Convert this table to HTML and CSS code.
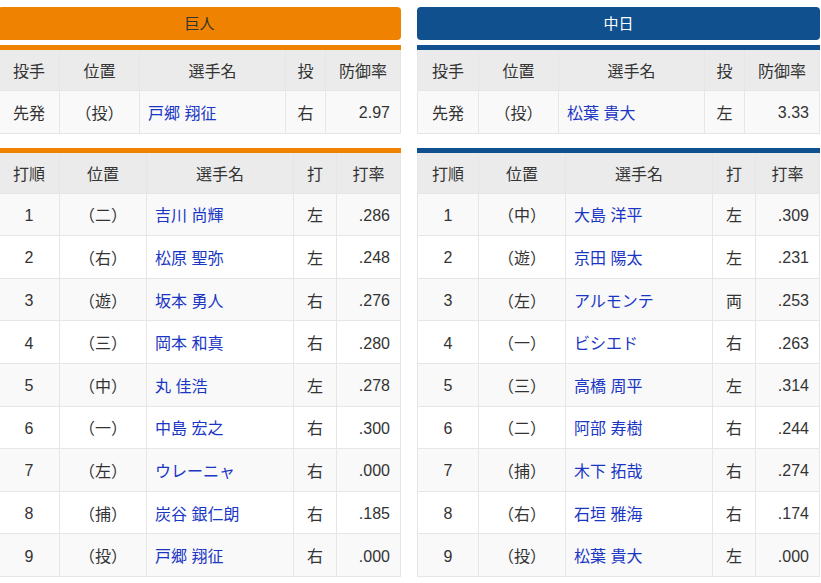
FILE: index.html
```html
<!DOCTYPE html>
<html lang="ja">
<head>
<meta charset="utf-8">
<link rel="stylesheet" href="styles.css">
</head>
<body>
<div class="wrap">
  <section class="team giants">
    <div class="team-name">巨人</div>
    <table class="pitch">
      <colgroup><col class="c1"><col class="c2"><col class="c3"><col class="c4"><col class="c5"></colgroup>
      <thead><tr><th>投手</th><th>位置</th><th>選手名</th><th>投</th><th>防御率</th></tr></thead>
      <tbody>
        <tr><td>先発</td><td>（投）</td><td class="name">戸郷 翔征</td><td>右</td><td class="num">2.97</td></tr>
      </tbody>
    </table>
    <table class="bat">
      <colgroup><col class="c1"><col class="c2"><col class="c3"><col class="c4"><col class="c5"></colgroup>
      <thead><tr><th>打順</th><th>位置</th><th>選手名</th><th>打</th><th>打率</th></tr></thead>
      <tbody>
        <tr><td class="ord">1</td><td>（二）</td><td class="name">吉川 尚輝</td><td>左</td><td class="num">.286</td></tr>
        <tr><td class="ord">2</td><td>（右）</td><td class="name">松原 聖弥</td><td>左</td><td class="num">.248</td></tr>
        <tr><td class="ord">3</td><td>（遊）</td><td class="name">坂本 勇人</td><td>右</td><td class="num">.276</td></tr>
        <tr><td class="ord">4</td><td>（三）</td><td class="name">岡本 和真</td><td>右</td><td class="num">.280</td></tr>
        <tr><td class="ord">5</td><td>（中）</td><td class="name">丸 佳浩</td><td>左</td><td class="num">.278</td></tr>
        <tr><td class="ord">6</td><td>（一）</td><td class="name">中島 宏之</td><td>右</td><td class="num">.300</td></tr>
        <tr><td class="ord">7</td><td>（左）</td><td class="name">ウレーニャ</td><td>右</td><td class="num">.000</td></tr>
        <tr><td class="ord">8</td><td>（捕）</td><td class="name">炭谷 銀仁朗</td><td>右</td><td class="num">.185</td></tr>
        <tr><td class="ord">9</td><td>（投）</td><td class="name">戸郷 翔征</td><td>右</td><td class="num">.000</td></tr>
      </tbody>
    </table>
  </section>
  <section class="team dragons">
    <div class="team-name">中日</div>
    <table class="pitch">
      <colgroup><col class="c1"><col class="c2"><col class="c3"><col class="c4"><col class="c5"></colgroup>
      <thead><tr><th>投手</th><th>位置</th><th>選手名</th><th>投</th><th>防御率</th></tr></thead>
      <tbody>
        <tr><td>先発</td><td>（投）</td><td class="name">松葉 貴大</td><td>左</td><td class="num">3.33</td></tr>
      </tbody>
    </table>
    <table class="bat">
      <colgroup><col class="c1"><col class="c2"><col class="c3"><col class="c4"><col class="c5"></colgroup>
      <thead><tr><th>打順</th><th>位置</th><th>選手名</th><th>打</th><th>打率</th></tr></thead>
      <tbody>
        <tr><td class="ord">1</td><td>（中）</td><td class="name">大島 洋平</td><td>左</td><td class="num">.309</td></tr>
        <tr><td class="ord">2</td><td>（遊）</td><td class="name">京田 陽太</td><td>左</td><td class="num">.231</td></tr>
        <tr><td class="ord">3</td><td>（左）</td><td class="name">アルモンテ</td><td>両</td><td class="num">.253</td></tr>
        <tr><td class="ord">4</td><td>（一）</td><td class="name">ビシエド</td><td>右</td><td class="num">.263</td></tr>
        <tr><td class="ord">5</td><td>（三）</td><td class="name">高橋 周平</td><td>左</td><td class="num">.314</td></tr>
        <tr><td class="ord">6</td><td>（二）</td><td class="name">阿部 寿樹</td><td>右</td><td class="num">.244</td></tr>
        <tr><td class="ord">7</td><td>（捕）</td><td class="name">木下 拓哉</td><td>右</td><td class="num">.274</td></tr>
        <tr><td class="ord">8</td><td>（右）</td><td class="name">石垣 雅海</td><td>右</td><td class="num">.174</td></tr>
        <tr><td class="ord">9</td><td>（投）</td><td class="name">松葉 貴大</td><td>左</td><td class="num">.000</td></tr>
      </tbody>
    </table>
  </section>
</div>
</body>
</html>
```
FILE: styles.css
```css
html, body {
  margin: 0;
  padding: 0;
  background: #fff;
}
body {
  font-family: "Liberation Sans", "Noto Sans CJK JP", sans-serif;
  font-size: 16px;
  color: #333;
  overflow: hidden;
}
.wrap {
  display: flex;
  gap: 17px;
  width: 821px;
  margin: 7px 0 0 -2px;
}
.team {
  width: 402px;
  flex: none;
}
.team-name {
  height: 33px;
  line-height: 33px;
  text-align: center;
  font-size: 15px;
  border-radius: 4px;
  margin-bottom: 5px;
  width: 403px;
}
.giants .team-name {
  background: #ef8200;
  color: #333;
}
.dragons .team-name {
  background: #10508f;
  color: #fff;
}
table {
  width: 402px;
  border-collapse: collapse;
  table-layout: fixed;
}
.giants table { border-top: 5px solid #ef8200; }
.dragons table { border-top: 5px solid #10508f; }
.pitch { margin-bottom: 14px; }
th, td {
  border: 1px solid #e6e6e6;
  text-align: center;
  padding: 0;
  font-weight: normal;
  white-space: nowrap;
}
th {
  background: #ebebeb;
  height: 40px;
}
td {
  height: 41.6px;
}
tbody tr:nth-child(odd) td { background: #f9f9f9; }
tbody tr:nth-child(even) td { background: #fff; }
td.name {
  text-align: left;
  padding-left: 8px;
  color: #1a36c4;
}
td.num {
  text-align: right;
  padding-right: 10px;
}
td.num, td.ord {
  padding-top: 3px;
  height: 38.6px;
}
.pitch .c1 { width: 61px; }
.pitch .c2 { width: 80px; }
.pitch .c3 { width: 146px; }
.pitch .c4 { width: 40px; }
.pitch .c5 { width: 75px; }
.bat .c1 { width: 61px; }
.bat .c2 { width: 87px; }
.bat .c3 { width: 147px; }
.bat .c4 { width: 43px; }
.bat .c5 { width: 64px; }
```
